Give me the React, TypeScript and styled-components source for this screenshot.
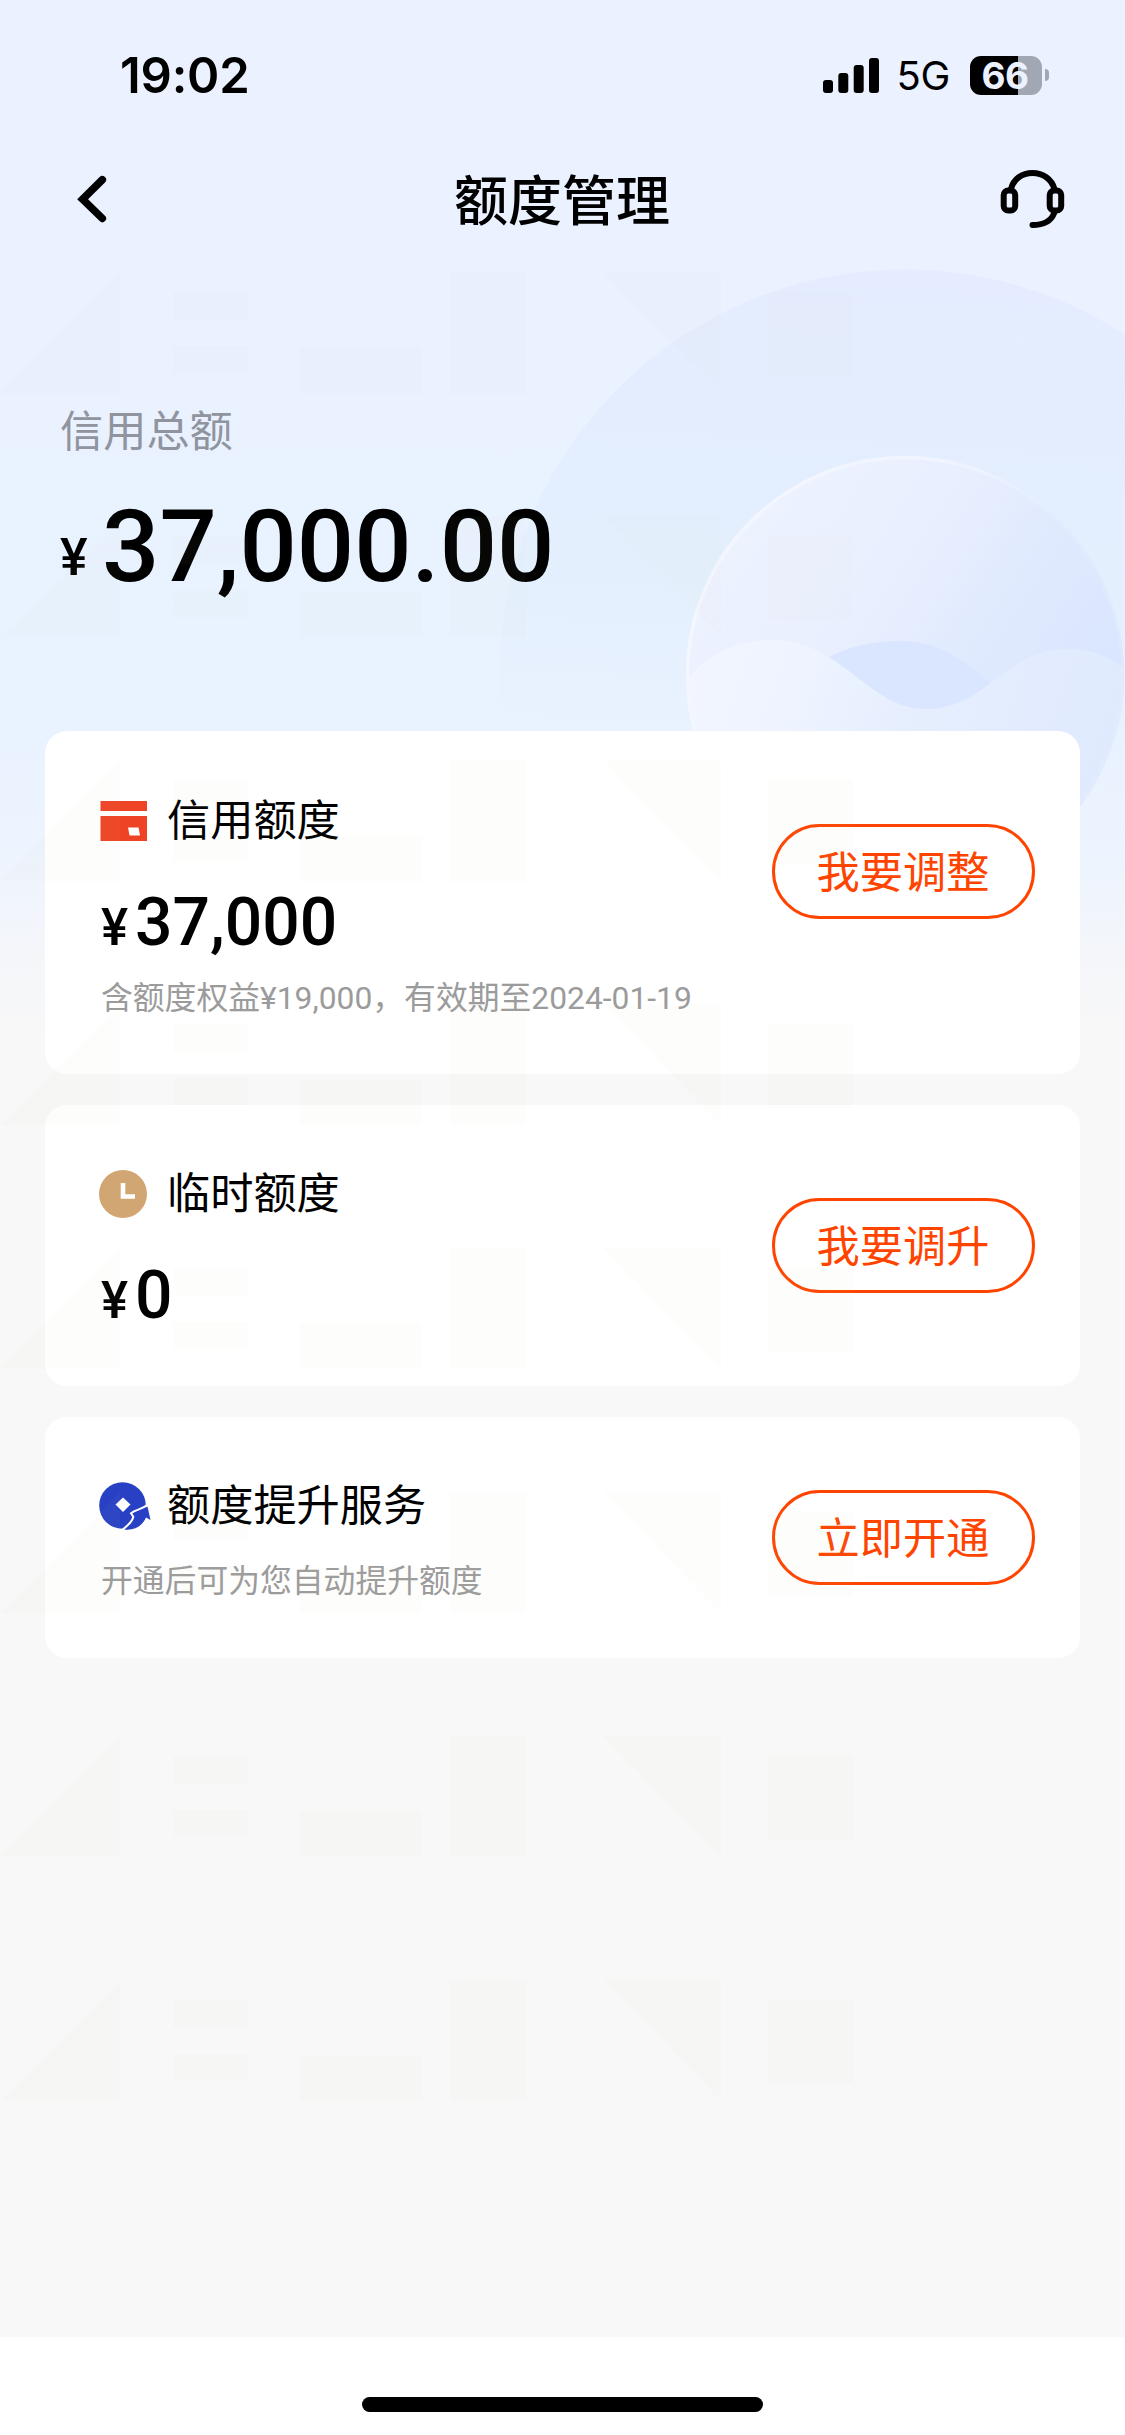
import React from 'react';
import styled, { createGlobalStyle } from 'styled-components';

const CJK = "'Noto Sans CJK SC', sans-serif";

const GlobalStyle = createGlobalStyle`
  *, *::before, *::after { box-sizing: border-box; }
  body { margin: 0; background: #f8f8f8; }
`;

const Screen = styled.div`
  position: relative;
  display: flex;
  flex-direction: column;
  width: 1125px;
  height: 2435px;
  overflow: hidden;
  background: linear-gradient(180deg, #ebf1ff 0, #eaf1ff 400px, #e8f3ff 600px, #e9f2ff 731px, #edf4fe 850px, #f4f6fa 950px, #f8f8f8 1040px);
  font-family: Roboto, ${CJK};
  color: #000;
`;

const Backdrop = styled.svg`
  position: absolute;
  top: 0;
  left: 0;
`;

const Watermark = styled.svg`
  position: absolute;
  top: 0;
  left: 0;
  pointer-events: none;
`;

const StatusBar = styled.div`
  position: relative;
  display: flex;
  align-items: center;
  justify-content: space-between;
  height: 150px;
  padding: 0 76px 0 120px;
  font-family: Inter, sans-serif;
`;

const Time = styled.span`
  padding-top: 1px;
  font-size: 49px;
  font-weight: 600;
  line-height: 60px;
  letter-spacing: -0.2px;
`;

const StatusRight = styled.div`
  display: flex;
  align-items: center;
`;

const Network = styled.span`
  margin-left: 16px;
  width: 73.5px;
  padding-top: 2px;
  font-size: 40px;
  font-weight: 400;
  line-height: 48px;
  letter-spacing: -0.2px;
`;

const Battery = styled.div`
  display: flex;
  align-items: center;
  gap: 3px;
`;

const BatteryBody = styled.div<{ $level: number }>`
  width: 72px;
  height: 39px;
  padding-right: 2px;
  border-radius: 11px;
  background: linear-gradient(90deg, #000 ${p => p.$level}%, #a2a7b4 ${p => p.$level}%);
  color: #ebf1ff;
  font-size: 37px;
  font-weight: 700;
  line-height: 39px;
  text-align: center;
  letter-spacing: -0.5px;
`;

const BatteryNub = styled.div`
  width: 4px;
  height: 12px;
  border-radius: 0 5px 5px 0;
  background: #a2a7b4;
`;

const NavBar = styled.header`
  position: relative;
  display: flex;
  align-items: center;
  justify-content: space-between;
  height: 100px;
  padding: 0 60px 0 75px;
`;

const NavTitle = styled.h1`
  margin: 0;
  padding: 0 16px 4px 0;
  font-family: ${CJK};
  font-size: 54px;
  font-weight: 500;
  line-height: 80px;
`;

const NavSlot = styled.div`
  display: flex;
  width: 66px;
`;

const Summary = styled.section`
  position: relative;
  display: flex;
  flex-direction: column;
  height: 481px;
  padding: 151px 60px 0;
`;

const SummaryLabel = styled.div`
  font-size: 43.2px;
  font-weight: 400;
  line-height: 64px;
  color: #8f949e;
`;

const SummaryAmount = styled.div`
  display: flex;
  align-items: baseline;
  margin-top: 22px;
  font-size: 101px;
  font-weight: 500;
  line-height: 120px;
`;

const SummaryCurrency = styled.span`
  width: 42px;
  font-size: 52px;
  transform: translateY(-6px);
`;

const CardList = styled.main`
  position: relative;
  display: flex;
  flex: 1;
  flex-direction: column;
  gap: 31px;
  padding: 0 45px;
`;

const Card = styled.section<{ $height: number; $top: number; $lift?: number }>`
  display: flex;
  align-items: center;
  justify-content: space-between;
  height: ${p => p.$height}px;
  padding: 0 45px 0 54px;
  border-radius: 22px;
  background: #fff;

  > div { align-self: flex-start; padding-top: ${p => p.$top}px; }
  > button { margin-bottom: ${p => p.$lift ?? 0}px; }
`;

const CardInfo = styled.div`
  display: flex;
  flex-direction: column;
`;

const CardHeading = styled.div`
  display: flex;
  align-items: center;
  gap: 20px;
  height: 64px;
  font-size: 43.2px;
  line-height: 66px;

  > span { padding-top: 2px; }
`;

const CardAmount = styled.div`
  display: flex;
  align-items: baseline;
  margin-top: 32px;
  padding-left: 2px;
  font-size: 66px;
  font-weight: 500;
  line-height: 76px;
`;

const CardCurrency = styled.span`
  width: 34px;
  font-size: 51px;
`;

const CardNote = styled.div<{ $gap: number }>`
  margin-top: ${p => p.$gap}px;
  padding-left: 2px;
  font-size: 31.8px;
  font-weight: 400;
  line-height: 48px;
  color: #9b9b9b;
`;

const PillButton = styled.button`
  width: 263px;
  height: 95px;
  padding: 0 1px 6px 0;
  border: 3px solid #ff4400;
  border-radius: 48px;
  background: transparent;
  color: #ff4400;
  font-family: ${CJK};
  font-size: 43.2px;
  line-height: 60px;
`;

const HomeBar = styled.footer`
  position: relative;
  display: flex;
  justify-content: center;
  height: 98px;
  padding-top: 60px;
  background: #fff;
`;

const HomeIndicator = styled.div`
  width: 401px;
  height: 15px;
  border-radius: 8px;
  background: #000;
`;

const SignalIcon = () => (
  <svg width="58" height="39" viewBox="0 0 58 39">
    <rect x="0" y="24" width="10" height="13" rx="3" />
    <rect x="15.3" y="17" width="10" height="20" rx="3" />
    <rect x="30.7" y="9" width="10" height="28" rx="3" />
    <rect x="46" y="2" width="10" height="35" rx="3" />
  </svg>
);

const BackIcon = () => (
  <svg width="34" height="50" viewBox="0 0 34 50" fill="none" stroke="#000" strokeWidth="7.6" strokeLinecap="round">
    <path d="M27.3 4.7 7.6 24.2 27.3 43.4" />
  </svg>
);

const HeadsetIcon = () => (
  <svg width="66" height="60" viewBox="0 0 66 60" fill="none" stroke="#000" strokeWidth="6" strokeLinecap="round">
    <path d="M12 19C14.5 9 23 3 33.5 3S52.5 9 55.5 19" />
    <rect x="4.7" y="20.5" width="11.5" height="20" rx="4.5" />
    <rect x="50.7" y="20.5" width="11.5" height="20" rx="4.5" />
    <path d="M55 43.5C52 51 44 55 33.5 55" />
  </svg>
);

const CardIcon = () => (
  <svg width="48" height="48" viewBox="0 0 48 48">
    <rect x="1.5" y="4" width="46.5" height="10" fill="#ee4325" />
    <rect x="1.5" y="19" width="46.5" height="25" fill="#ee4325" />
    <path d="M29 30.500h10.500l1.500 8H30.500z" fill="#fff" />
  </svg>
);

const ClockIcon = () => (
  <svg width="48" height="48" viewBox="0 0 48 48">
    <circle cx="24" cy="24" r="24" fill="#d1a672" />
    <path d="M24 13v13.500h12" fill="none" stroke="#fff" strokeWidth="4.600" />
  </svg>
);

const BoostSvg = styled.svg`
  margin-right: -4px;
`;

const BoostIcon = () => (
  <BoostSvg width="52" height="48" viewBox="0 0 52 48">
    <circle cx="23.500" cy="23.500" r="23.300" fill="#2841c4" />
    <path d="M24 15.500 31.500 22.500 24 30 16.500 22.500z" fill="#fff" />
    <path d="M25 47.500C31 43 34.500 38 35.500 33L34 31C38 28.500 43 28 48.500 24.500L51.500 38 47 35.500C43.500 44 35 49 25 47.500z" fill="#2841c4" />
    <path d="M23 48C29 43.500 33.500 39 34.300 34.700L32 31.200C37 27.500 43 27.500 48.500 22.800" fill="none" stroke="#fff" strokeWidth="2" />
  </BoostSvg>
);

function BackdropArt() {
  return (
    <Backdrop width="1125" height="1050" viewBox="0 0 1125 1050">
      <defs>
        <linearGradient id="halo" x1="0.3" y1="0" x2="0.25" y2="1">
          <stop offset="0" stopColor="#e5ecff" />
          <stop offset="0.28" stopColor="#e3eefe" />
          <stop offset="0.42" stopColor="#e4effe" stopOpacity="0.8" />
          <stop offset="0.56" stopColor="#e8f1fe" stopOpacity="0.5" />
          <stop offset="0.75" stopColor="#eef4fe" stopOpacity="0.3" />
          <stop offset="0.9" stopColor="#f8f8f8" stopOpacity="0" />
        </linearGradient>
        <linearGradient id="disc" x1="0.15" y1="0.15" x2="0.9" y2="0.65">
          <stop offset="0" stopColor="#edf2ff" />
          <stop offset="0.35" stopColor="#e9effe" />
          <stop offset="0.65" stopColor="#e0eafe" />
          <stop offset="1" stopColor="#d9e5ff" />
        </linearGradient>
        <linearGradient id="rim" x1="0" y1="0.2" x2="1" y2="0.5">
          <stop offset="0" stopColor="#f4f7ff" />
          <stop offset="0.5" stopColor="#eff4ff" />
          <stop offset="0.8" stopColor="#e6eeff" stopOpacity="0.3" />
        </linearGradient>
        <linearGradient id="frontWave" x1="0" y1="0" x2="1" y2="0.2">
          <stop offset="0" stopColor="#f3f6ff" />
          <stop offset="0.3" stopColor="#edf3ff" />
          <stop offset="0.5" stopColor="#e7effe" />
          <stop offset="1" stopColor="#e0eafe" />
        </linearGradient>
        <clipPath id="discClip"><circle cx="905" cy="675" r="219" /></clipPath>
      </defs>
      <circle cx="905" cy="675" r="405.500" fill="url(#halo)" />
      <circle cx="905" cy="675" r="219" fill="url(#disc)" />
      <g clipPath="url(#discClip)">
        <path d="M780 700C810 660 850 641 899 641S970 668 1000 690L924 730z" fill="#dae5ff" />
        <path d="M686 681C710 652 740 640 773 640C840 640 870 709 925 709C990 709 1000 649 1070 649C1095 649 1112 658 1130 674V900H686z" fill="url(#frontWave)" />
      </g>
      <circle cx="905" cy="675" r="217.500" fill="none" stroke="url(#rim)" strokeWidth="3.500" />
    </Backdrop>
  );
}

function WatermarkArt() {
  return (
    <Watermark width="1125" height="2110" viewBox="0 0 1125 2110">
      <defs>
        <pattern id="mark" x="0" y="272.500" width="1125" height="243.900" patternUnits="userSpaceOnUse">
          <g fill="#d0d0a8" fillOpacity="0.035">
            <path d="M0 121 120 1V121z" />
            <path d="M173 20h75v28h-75zM173 74h75v27h-75z" />
            <path d="M300 75h122v46H300zM450 0h76v121h-76z" />
            <path d="M603 0h118v121z" />
            <path d="M768 19h85v85h-85z" />
          </g>
        </pattern>
      </defs>
      <rect y="272.500" width="1125" height="1837" fill="url(#mark)" />
    </Watermark>
  );
}

export default function App() {
  return (
    <>
      <GlobalStyle />
      <Screen>
        <BackdropArt />
        <StatusBar>
          <Time>19:02</Time>
          <StatusRight>
            <SignalIcon />
            <Network>5G</Network>
            <Battery>
              <BatteryBody $level={66}>66</BatteryBody>
              <BatteryNub />
            </Battery>
          </StatusRight>
        </StatusBar>
        <NavBar>
          <NavSlot><BackIcon /></NavSlot>
          <NavTitle>额度管理</NavTitle>
          <NavSlot><HeadsetIcon /></NavSlot>
        </NavBar>
        <Summary>
          <SummaryLabel>信用总额</SummaryLabel>
          <SummaryAmount>
            <SummaryCurrency>¥</SummaryCurrency>
            37,000.00
          </SummaryAmount>
        </Summary>
        <CardList>
          <Card $height={343} $top={58} $lift={62}>
            <CardInfo>
              <CardHeading><CardIcon /><span>信用额度</span></CardHeading>
              <CardAmount><CardCurrency>¥</CardCurrency>37,000</CardAmount>
              <CardNote $gap={8}>含额度权益¥19,000，有效期至2024-01-19</CardNote>
            </CardInfo>
            <PillButton>我要调整</PillButton>
          </Card>
          <Card $height={281} $top={57}>
            <CardInfo>
              <CardHeading><ClockIcon /><span>临时额度</span></CardHeading>
              <CardAmount><CardCurrency>¥</CardCurrency>0</CardAmount>
            </CardInfo>
            <PillButton>我要调升</PillButton>
          </Card>
          <Card $height={241} $top={57}>
            <CardInfo>
              <CardHeading><BoostIcon /><span>额度提升服务</span></CardHeading>
              <CardNote $gap={19}>开通后可为您自动提升额度</CardNote>
            </CardInfo>
            <PillButton>立即开通</PillButton>
          </Card>
        </CardList>
        <HomeBar><HomeIndicator /></HomeBar>
        <WatermarkArt />
      </Screen>
    </>
  );
}
